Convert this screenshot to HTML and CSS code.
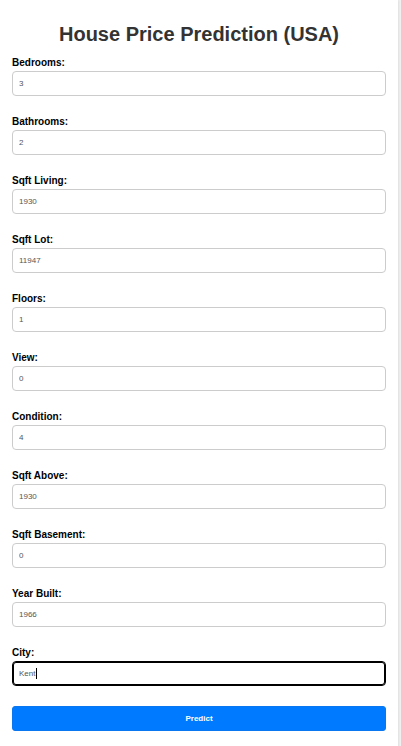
FILE: index.html
```html
<!DOCTYPE html>
<html lang="en">
<head>
<meta charset="utf-8">
<title>House Price Prediction (USA)</title>
<link rel="stylesheet" href="styles.css">
</head>
<body>
<div class="container">
  <h1 class="title">House Price Prediction (USA)</h1>
  <form class="form">
    <div class="field"><label class="label" for="bedrooms">Bedrooms:</label><input class="input" id="bedrooms" type="text" value="3"></div>
    <div class="field"><label class="label" for="bathrooms">Bathrooms:</label><input class="input" id="bathrooms" type="text" value="2"></div>
    <div class="field"><label class="label" for="sqft_living">Sqft Living:</label><input class="input" id="sqft_living" type="text" value="1930"></div>
    <div class="field"><label class="label" for="sqft_lot">Sqft Lot:</label><input class="input" id="sqft_lot" type="text" value="11947"></div>
    <div class="field"><label class="label" for="floors">Floors:</label><input class="input" id="floors" type="text" value="1"></div>
    <div class="field"><label class="label" for="view">View:</label><input class="input" id="view" type="text" value="0"></div>
    <div class="field"><label class="label" for="condition">Condition:</label><input class="input" id="condition" type="text" value="4"></div>
    <div class="field"><label class="label" for="sqft_above">Sqft Above:</label><input class="input" id="sqft_above" type="text" value="1930"></div>
    <div class="field"><label class="label" for="sqft_basement">Sqft Basement:</label><input class="input" id="sqft_basement" type="text" value="0"></div>
    <div class="field"><label class="label" for="yr_built">Year Built:</label><input class="input" id="yr_built" type="text" value="1966"></div>
    <div class="field"><label class="label" for="city">City:</label><span class="input-wrap caret"><input class="input input-active" id="city" type="text" value="Kent"></span></div>
    <button class="button" type="button">Predict</button>
  </form>
</div>
</body>
</html>
```

FILE: styles.css
```css
html, body {
  margin: 0;
  padding: 0;
}
body {
  background: #f1f1f1;
  font-family: "Liberation Sans", Arial, sans-serif;
  overflow: hidden;
}
.container {
  width: 398px;
  box-sizing: border-box;
  min-height: 746px;
  background: #ffffff;
  padding: 22px 12px 16px 12px;
  box-shadow: 1px 0 2px rgba(0, 0, 0, 0.08);
}
.title {
  margin: 0 0 11px 0;
  font-size: 20px;
  line-height: 24px;
  font-weight: bold;
  color: #333333;
  text-align: center;
}
.form {
  display: flex;
  flex-direction: column;
  gap: 20px;
}
.field {
  display: flex;
  flex-direction: column;
  gap: 2px;
}
.label {
  font-size: 10px;
  line-height: 12px;
  font-weight: bold;
  color: #000000;
}
.input-wrap {
  position: relative;
  display: block;
}
.caret::after {
  content: "";
  position: absolute;
  left: 24px;
  top: 7px;
  width: 1px;
  height: 11px;
  background: #000000;
}
.input {
  box-sizing: border-box;
  width: 100%;
  height: 25px;
  margin: 0;
  padding: 0 6px;
  border: 1px solid #cccccc;
  border-radius: 4px;
  font-family: "Liberation Sans", Arial, sans-serif;
  font-size: 8px;
  color: #555555;
  background: #ffffff;
  outline: none;
}
.input-active,
.input:focus {
  border-color: #000000;
  box-shadow: inset 0 0 0 1px #000000;
}
.button {
  box-sizing: border-box;
  width: 100%;
  height: 25px;
  margin: 0;
  border: 1px solid #0a76f0;
  border-radius: 3px;
  background: #007bff;
  color: #ffffff;
  font-family: "Liberation Sans", Arial, sans-serif;
  font-size: 8px;
  font-weight: bold;
  cursor: pointer;
}
```
